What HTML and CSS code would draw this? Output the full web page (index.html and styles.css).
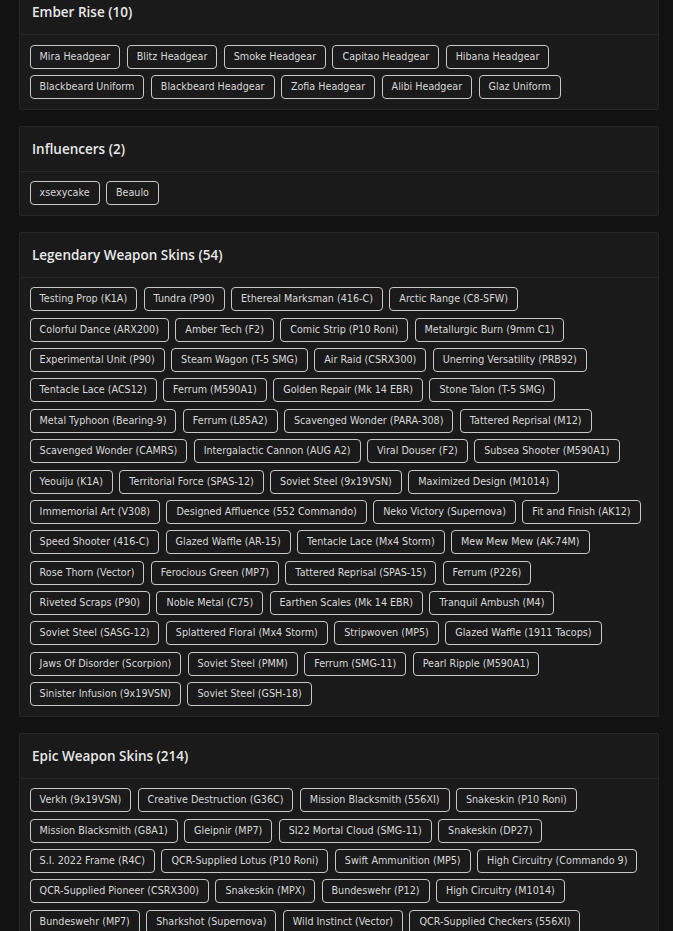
FILE: index.html
```html
<!DOCTYPE html>
<html lang="en">
<head>
    <meta charset="UTF-8">
    <meta name="viewport" content="width=device-width, initial-scale=1.0">
    <title>Collection</title>
    <link rel="stylesheet" href="styles.css">
</head>
<body>

<div class="page">
    <div class="card">
        <div class="card-header">Ember Rise (10)</div>
        <div class="card-body">
            <span class="item">Mira Headgear</span>
            <span class="item">Blitz Headgear</span>
            <span class="item">Smoke Headgear</span>
            <span class="item">Capitao Headgear</span>
            <span class="item">Hibana Headgear</span>
            <span class="item">Blackbeard Uniform</span>
            <span class="item">Blackbeard Headgear</span>
            <span class="item">Zofia Headgear</span>
            <span class="item">Alibi Headgear</span>
            <span class="item">Glaz Uniform</span>
        </div>
    </div>

    <div class="card">
        <div class="card-header">Influencers (2)</div>
        <div class="card-body">
            <span class="item">xsexycake</span>
            <span class="item">Beaulo</span>
        </div>
    </div>

    <div class="card">
        <div class="card-header">Legendary Weapon Skins (54)</div>
        <div class="card-body">
            <span class="item">Testing Prop (K1A)</span>
            <span class="item">Tundra (P90)</span>
            <span class="item">Ethereal Marksman (416-C)</span>
            <span class="item">Arctic Range (C8-SFW)</span>
            <span class="item">Colorful Dance (ARX200)</span>
            <span class="item">Amber Tech (F2)</span>
            <span class="item">Comic Strip (P10 Roni)</span>
            <span class="item">Metallurgic Burn (9mm C1)</span>
            <span class="item">Experimental Unit (P90)</span>
            <span class="item">Steam Wagon (T-5 SMG)</span>
            <span class="item">Air Raid (CSRX300)</span>
            <span class="item">Unerring Versatility (PRB92)</span>
            <span class="item">Tentacle Lace (ACS12)</span>
            <span class="item">Ferrum (M590A1)</span>
            <span class="item">Golden Repair (Mk 14 EBR)</span>
            <span class="item">Stone Talon (T-5 SMG)</span>
            <span class="item">Metal Typhoon (Bearing-9)</span>
            <span class="item">Ferrum (L85A2)</span>
            <span class="item">Scavenged Wonder (PARA-308)</span>
            <span class="item">Tattered Reprisal (M12)</span>
            <span class="item">Scavenged Wonder (CAMRS)</span>
            <span class="item">Intergalactic Cannon (AUG A2)</span>
            <span class="item">Viral Douser (F2)</span>
            <span class="item">Subsea Shooter (M590A1)</span>
            <span class="item">Yeouiju (K1A)</span>
            <span class="item">Territorial Force (SPAS-12)</span>
            <span class="item">Soviet Steel (9x19VSN)</span>
            <span class="item">Maximized Design (M1014)</span>
            <span class="item">Immemorial Art (V308)</span>
            <span class="item">Designed Affluence (552 Commando)</span>
            <span class="item">Neko Victory (Supernova)</span>
            <span class="item">Fit and Finish (AK12)</span>
            <span class="item">Speed Shooter (416-C)</span>
            <span class="item">Glazed Waffle (AR-15)</span>
            <span class="item">Tentacle Lace (Mx4 Storm)</span>
            <span class="item">Mew Mew Mew (AK-74M)</span>
            <span class="item">Rose Thorn (Vector)</span>
            <span class="item">Ferocious Green (MP7)</span>
            <span class="item">Tattered Reprisal (SPAS-15)</span>
            <span class="item">Ferrum (P226)</span>
            <span class="item">Riveted Scraps (P90)</span>
            <span class="item">Noble Metal (C75)</span>
            <span class="item">Earthen Scales (Mk 14 EBR)</span>
            <span class="item">Tranquil Ambush (M4)</span>
            <span class="item">Soviet Steel (SASG-12)</span>
            <span class="item">Splattered Floral (Mx4 Storm)</span>
            <span class="item">Stripwoven (MP5)</span>
            <span class="item">Glazed Waffle (1911 Tacops)</span>
            <span class="item">Jaws Of Disorder (Scorpion)</span>
            <span class="item">Soviet Steel (PMM)</span>
            <span class="item">Ferrum (SMG-11)</span>
            <span class="item">Pearl Ripple (M590A1)</span>
            <span class="item">Sinister Infusion (9x19VSN)</span>
            <span class="item">Soviet Steel (GSH-18)</span>
        </div>
    </div>

    <div class="card">
        <div class="card-header">Epic Weapon Skins (214)</div>
        <div class="card-body">
            <span class="item">Verkh (9x19VSN)</span>
            <span class="item">Creative Destruction (G36C)</span>
            <span class="item">Mission Blacksmith (556XI)</span>
            <span class="item">Snakeskin (P10 Roni)</span>
            <span class="item">Mission Blacksmith (G8A1)</span>
            <span class="item">Gleipnir (MP7)</span>
            <span class="item">SI22 Mortal Cloud (SMG-11)</span>
            <span class="item">Snakeskin (DP27)</span>
            <span class="item">S.I. 2022 Frame (R4C)</span>
            <span class="item">QCR-Supplied Lotus (P10 Roni)</span>
            <span class="item">Swift Ammunition (MP5)</span>
            <span class="item">High Circuitry (Commando 9)</span>
            <span class="item">QCR-Supplied Pioneer (CSRX300)</span>
            <span class="item">Snakeskin (MPX)</span>
            <span class="item">Bundeswehr (P12)</span>
            <span class="item">High Circuitry (M1014)</span>
            <span class="item">Bundeswehr (MP7)</span>
            <span class="item">Sharkshot (Supernova)</span>
            <span class="item">Wild Instinct (Vector)</span>
            <span class="item">QCR-Supplied Checkers (556XI)</span>
            <span class="item">Bundeswehr (G8A1)</span>
            <span class="item">Snakeskin (SC3000K)</span>
            <span class="item">High Circuitry (AR33)</span>
        </div>
    </div>
</div>

</body>
</html>
```

FILE: styles.css
```css
html {
    font-size: 16px;
}
body {
    font-family: "DejaVu Sans", sans-serif;
    background-color: #121212;
    color: #e4e4e4;
    margin: 0;
}
.page {
    margin: -11px 14px 0 19px;
}
.card {
    background-color: #1a1a1a;
    border: 1px solid #262626;
    border-radius: 2px;
    margin-bottom: 16px;
}
.card-header {
    font-family: "Open Sans", sans-serif;
    font-size: 13.5px;
    font-weight: 600;
    line-height: 20px;
    padding: 12px 12px;
    border-bottom: 1px solid #262626;
    color: #e8e8e8;
}
.card-body {
    display: flex;
    flex-wrap: wrap;
    padding: 6.4px;
}
.item {
    font-size: 0.6rem;
    line-height: 14px;
    padding: 4px 9px;
    margin: 3.2px;
    border: 1px solid #c8c8c8;
    border-radius: 4px;
    color: #d8d8d8;
    white-space: nowrap;
}
```
